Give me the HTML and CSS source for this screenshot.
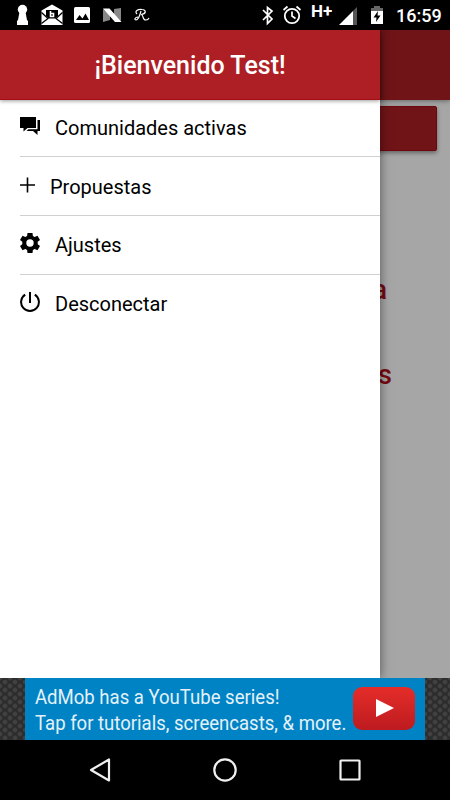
FILE: index.html
```html
<!DOCTYPE html>
<html lang="es">
<head>
    <meta charset="UTF-8">
    <meta name="viewport" content="width=device-width, initial-scale=1.0">
    <title>Menu</title>
    <!-- Styles -->
    <link rel="stylesheet" href="styles.css">
</head>
<body>
    <div class="status-bar">
        <div class="notifications">
            <svg viewBox="0 0 30 30"><circle cx="15.500" cy="9.500" r="4.700" fill="#fff"/><path fill="#fff" d="M12.500 12h6l1.500 8 1 1v4H10v-4l1-1z"/></svg>
            <svg viewBox="0 0 30 30"><path fill="#fff" d="M4.500 10.500L15 4.500l10.500 6v14.500h-21z"/><path d="M9 10h12v6l-3 2.500h-6L9 16z"/><path d="M4.500 12.500l6.500 6-6.500 5M25.500 12.500l-6.500 6 6.500 5" fill="none" stroke="#000" stroke-width="1.300"/><path d="M13.500 11v5.500h3v-3h-3" fill="none" stroke="#fff" stroke-width="1.600"/></svg>
            <svg viewBox="0 0 30 30"><rect x="7" y="7" width="16" height="16" rx="1.500" fill="#fff"/><path d="M9 20l3.500-5 3 3.500 3-5 3.500 6.500z"/></svg>
            <svg viewBox="0 0 30 30"><path fill="#888" d="M6 9l7 5v6l-7 2zM17 9l7-1v13l-7-5z"/><path fill="#fff" d="M6 8.500h6.500l12 13.500H18z"/></svg>
            <svg viewBox="0 0 30 30"><path d="M10 14c-3-3 1-5 5-4.500 5 .5 4 4.500-1 5 3 0 1 6 5 5.500q2 0 3-2M14 11c-1 4-3 9-5 9s-1-3 2-3" fill="none" stroke="#fff" stroke-width="1.200"/></svg>
        </div>
        <div class="system">
            <svg class="bluetooth" viewBox="0 0 14 30"><path d="M2 10l9 9-4.500 4.500v-16L11 11l-9 9" fill="none" stroke="#fff" stroke-width="1.700"/></svg>
            <svg class="alarm" viewBox="0 0 20 30"><circle cx="10" cy="16" r="7.200" fill="none" stroke="#fff" stroke-width="1.800"/><path d="M10 11.500V16l3.500 2.500M1.500 10l4-3.500M18.500 10l-4-3.500" fill="none" stroke="#fff" stroke-width="1.700"/></svg>
            <span class="network">H+</span>
            <svg class="signal" viewBox="0 0 18 30"><path fill="#555" d="M14 11l4-4v18h-4z"/><path fill="#fff" d="M0 25L14 11v14z"/></svg>
            <svg class="battery" viewBox="0 0 12 30"><path fill="#666" d="M3 6h6v2h3v4H0V8h3z"/><path fill="#fff" d="M0 11h12v13H0z"/><path d="M7 11l-4.500 6.500h3L5 22l4.500-6.500h-3z"/></svg>
            <span class="time">16:59</span>
        </div>
    </div>
    <div class="app">
        <div class="page">
            <div class="page-header"></div>
            <div class="page-button"></div>
            <h2>Selecciona una</h2>
            <h2>de las propuestas</h2>
        </div>
        <div class="backdrop"></div>
        <div class="menu">
            <h1>¡Bienvenido Test!</h1>
            <ul>
                <li>
                    <svg width="20" height="20" viewBox="0 0 20 20"><path d="M0 1h16v11h-8.500L3.500 15.500V12H0z"/><path d="M17.500 4H20v11h-2.500v4L13 15H6.500l2-1.700h9z"/></svg>
                    <span>Comunidades activas</span>
                </li>
                <li>
                    <svg width="15" height="20" viewBox="0 0 15 20"><path d="M7.500 2.500v15M0 10h15" fill="none" stroke="#000" stroke-width="1.600"/></svg>
                    <span>Propuestas</span>
                </li>
                <li>
                    <svg width="20" height="20" viewBox="0 0 20 20"><path fill-rule="evenodd" d="M7.500 0h5l.4 2.900 1.800 1 2.800-1.100L20 6.900l-2.300 1.900v2.400L20 13.100l-2.500 4.100-2.800-1.100-1.800 1-.4 2.900h-5l-.4-2.900-1.800-1-2.800 1.100L0 13.100l2.300-1.900V8.800L0 6.900l2.500-4.100 2.800 1.100 1.800-1zM10 6.300a3.700 3.700 0 1 0 0 7.400 3.700 3.700 0 0 0 0-7.400z"/></svg>
                    <span>Ajustes</span>
                </li>
                <li>
                    <svg width="20" height="20" viewBox="0 0 20 20"><path d="M10 0v11M5.200 2.600a8.900 8.900 0 1 0 9.600 0" fill="none" stroke="#000" stroke-width="2"/></svg>
                    <span>Desconectar</span>
                </li>
            </ul>
        </div>
    </div>
    <!-- Banner -->
    <div class="banner">
        <div class="ad">
            <p><span>AdMob has a YouTube series!</span><br><span>Tap for tutorials, screencasts, &amp; more.</span></p>
            <div class="play">
                <svg width="18" height="20" viewBox="0 0 18 20"><path fill="#fff" d="M0 1l18 9-18 9z"/></svg>
            </div>
        </div>
    </div>
    <div class="nav-bar">
        <svg viewBox="0 0 30 30"><path d="M24 4.500v21L6 15z"/></svg>
        <svg viewBox="0 0 30 30"><circle cx="15" cy="15" r="10.700"/></svg>
        <svg viewBox="0 0 30 30"><rect x="5.500" y="5.500" width="19" height="19" rx=".5"/></svg>
    </div>
</body>
</html>
```
FILE: styles.css
```css
* {
    box-sizing: border-box;
}

body {
    margin: 0;
    width: 450px;
    height: 800px;
    display: flex;
    flex-direction: column;
    overflow: hidden;
    font-family: Roboto, sans-serif;
    background-color: black;
}

.status-bar {
    height: 30px;
    display: flex;
    justify-content: space-between;
    padding: 0 9px 0 7px;
    color: white;
}

.status-bar svg {
    display: block;
    height: 30px;
}

.notifications,
.system {
    display: flex;
}

.notifications svg {
    width: 30px;
}

.bluetooth {
    width: 14px;
    margin-right: 7px;
}

.alarm {
    width: 20px;
    margin-right: 9px;
}

.network {
    width: 22px;
    margin-right: 6px;
    font-size: 17px;
    line-height: 23px;
    font-weight: 700;
}

.signal {
    width: 18px;
    margin-right: 14px;
}

.battery {
    width: 12px;
    margin-right: 13px;
}

.time {
    width: 45px;
    font-size: 18px;
    font-weight: 500;
    line-height: 32px;
    white-space: nowrap;
}

.app {
    position: relative;
    height: 648px;
    overflow: hidden;
    background-color: white;
}

.page-header {
    height: 70px;
    background-color: #ad1f25;
    box-shadow: 0 1px 5px rgba(0, 0, 0, 0.4);
}

.page-button {
    height: 45px;
    margin: 6px 13px 122px;
    background-color: #ad1f25;
    border: 1px solid #a90b12;
    border-radius: 2px;
    box-shadow: 0 2px 4px rgba(0, 0, 0, 0.4);
}

.page h2 {
    margin: 0 63px 53px 0;
    font-size: 27px;
    line-height: 34px;
    font-weight: 500;
    text-align: right;
    color: #b5121b;
}

.page h2:last-child {
    margin-top: -2px;
    margin-right: 58px;
}

/* Menu lateral */
.backdrop {
    position: absolute;
    inset: 0;
    background-color: rgba(0, 0, 0, 0.35);
}

.menu {
    position: absolute;
    top: 0;
    left: 0;
    width: 380px;
    height: 100%;
    background-color: white;
    box-shadow: 0 0 10px rgba(0, 0, 0, 0.5);
}

.menu h1 {
    margin: 0;
    height: 70px;
    line-height: 71px;
    font-size: 25px;
    font-weight: 500;
    text-align: center;
    color: white;
    background-color: #ad1f25;
    border-bottom: 1px solid #a30d13;
    box-shadow: 0 1px 4px rgba(0, 0, 0, 0.4);
}

.menu ul {
    margin: -1.5px 0 0 20px;
    padding: 0;
    list-style: none;
}

.menu li {
    display: flex;
    align-items: center;
    gap: 15px;
    height: 58.7px;
    font-size: 20px;
    border-bottom: 1px solid #d0d0d0;
}

.menu li:last-child {
    border-bottom: none;
}

.menu li svg {
    margin-bottom: 3px;
}

.menu li span {
    padding-top: 1px;
}

.banner {
    height: 62px;
    display: flex;
    justify-content: center;
    background-color: #2c2c2c;
    background-image: radial-gradient(circle, #424242 1.5px, transparent 3px), radial-gradient(circle, #424242 1.5px, transparent 3px);
    background-position: 0 0, 5px 4px;
    background-size: 10px 8px;
}

.ad {
    width: 400px;
    display: flex;
    justify-content: space-between;
    padding: 6px 10px 0;
    background-color: #0083c5;
}

.ad p {
    margin: 0;
    width: 314px;
    font-size: 21px;
    line-height: 26px;
    white-space: nowrap;
    color: #e4f1f8;
}

.ad span {
    display: inline-block;
    transform-origin: left;
    transform: scaleX(0.883);
}

.play {
    width: 62px;
    height: 43px;
    margin-top: 3px;
    padding: 0 0 2px 2px;
    display: flex;
    align-items: center;
    justify-content: center;
    border-radius: 9px;
    background: linear-gradient(#e52d29, #bd1b20);
}

.nav-bar {
    height: 60px;
    display: flex;
    align-items: center;
    justify-content: center;
    gap: 95px;
}

.nav-bar svg {
    width: 30px;
    height: 30px;
    fill: none;
    stroke: #f0f0f0;
    stroke-width: 2.2;
    stroke-linejoin: round;
}
```
